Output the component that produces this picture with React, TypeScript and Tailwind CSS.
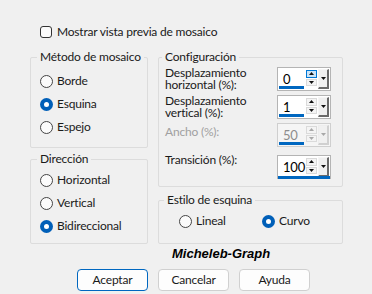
import { FC, ReactNode } from "react";

const font = { fontFamily: 'Lato, "Noto Sans", "Segoe UI", sans-serif' };

interface radioProps {
	label: string;
	checked?: boolean;
	className?: string;
}

const Radio: FC<radioProps> = ({ label, checked, className }) => {
	return (
		<div className={`flex items-center h-[16px] gap-[4px] ${className ?? ""}`}>
			{checked ? (
				<span className="w-[13px] h-[13px] rounded-full bg-[#005fb8] flex items-center justify-center shrink-0">
					<span className="w-[5px] h-[5px] rounded-full bg-white" />
				</span>
			) : (
				<span className="w-[13px] h-[13px] rounded-full border border-[#444] bg-[#fbfbfb] shrink-0" />
			)}
			<span className="whitespace-nowrap">{label}</span>
		</div>
	);
};

const Arrow: FC<{ up?: boolean; color: string }> = ({ up, color }) => (
	<svg width="5" height="3" viewBox="0 0 5 3">
		<polygon points={up ? "0,3 5,3 2.5,0" : "0,0 5,0 2.5,3"} fill={color} />
	</svg>
);

interface spinProps {
	value: string;
	disabled?: boolean;
	hot?: boolean;
	focused?: boolean;
}

const Spin: FC<spinProps> = ({ value, disabled, hot, focused }) => {
	const ink = disabled ? "#a8a8a8" : "#111";
	return (
		<div
			className={`w-[54px] h-[24px] border flex relative shrink-0 ${
				disabled ? "border-[#cfcfcf] bg-[#f5f5f5]" : "border-[#b4b4b4] bg-white"
			}`}>
			<div className="flex-1 relative">
				<span
					className={`absolute left-[5px] top-[3px] text-[13px] leading-[16px] ${
						disabled ? "text-[#8d8d8d]" : "text-black"
					}`}>
					{value}
				</span>
				{!focused && (
					<span className="absolute left-[1px] right-[2px] bottom-[1px] h-[3px] bg-[#0067c0]" />
				)}
			</div>
			<div className="w-[11px] flex flex-col pt-[2px] pb-[4px] gap-px">
				<div
					className={`flex-1 flex items-center justify-center border ${
						hot ? "border-[#0078d7] bg-[#cce4f7]" : "border-[#dadada] bg-[#f4f4f4]"
					}`}>
					<Arrow up color={ink} />
				</div>
				<div className="flex-1 flex items-center justify-center border border-[#dadada] bg-[#f4f4f4]">
					<Arrow color={ink} />
				</div>
			</div>
			<div
				className={`w-[11px] my-[1px] mx-[1px] flex items-center justify-center border-r-2 border-b-2 border-t border-l ${
					disabled
						? "border-r-[#d0d0d0] border-b-[#d0d0d0] border-t-[#ededed] border-l-[#ededed]"
						: "border-r-[#6a6a6a] border-b-[#6a6a6a] border-t-[#f6f6f6] border-l-[#f6f6f6]"
				} bg-[#f0f0f0]`}>
				<Arrow color={ink} />
			</div>
			{focused && (
				<span className="absolute left-0 right-0 bottom-[-1px] h-[3px] bg-[#0067c0]" />
			)}
		</div>
	);
};

interface groupProps {
	title: string;
	className: string;
	titleIndent: string;
	children: ReactNode;
}

// group box: title sits on the top border, pulled up by a negative margin
const Group: FC<groupProps> = ({ title, className, titleIndent, children }) => (
	<div className={`border border-[#dcdcdc] rounded-[2px] ${className}`}>
		<div
			className={`-mt-[9px] w-fit px-[3px] bg-[#f0f0f0] leading-[16px] h-[16px] whitespace-nowrap ${titleIndent}`}>
			{title}
		</div>
		{children}
	</div>
);

export default function App() {
	return (
		<div
			className="w-[372px] h-[294px] bg-[#f0f0f0] text-[12px] tracking-[-0.2px] text-[#1a1a1a] pt-[25px] pl-[30px] overflow-hidden"
			style={font}>
			<div className="flex items-center gap-[5px] ml-[10px] h-[14px]">
				<span className="w-[12px] h-[12px] border border-[#333] rounded-[3px] bg-[#fbfbfb]" />
				<span>Mostrar vista previa de mosaico</span>
			</div>

			<div className="flex gap-[10px] mt-[18px]">
				<div className="w-[118px] flex flex-col gap-[11px]">
					<Group title="Método de mosaico" className="h-[91px] pl-[9px]" titleIndent="ml-[-3px]">
						<div className="flex flex-col gap-[7px] mt-[8px]">
							<Radio label="Borde" />
							<Radio label="Esquina" checked />
							<Radio label="Espejo" />
						</div>
					</Group>
					<Group title="Dirección" className="h-[85px] pl-[9px]" titleIndent="ml-[-3px]">
						<div className="flex flex-col gap-[7px] mt-[5px]">
							<Radio label="Horizontal" />
							<Radio label="Vertical" />
							<Radio label="Bidireccional" checked />
						</div>
					</Group>
				</div>

				<div className="w-[185px] flex flex-col">
					<Group title="Configuración" className="h-[130px] pl-[6px] pr-[11px]" titleIndent="ml-[-3px]">
						<div className="flex items-start justify-between h-[24px] mt-[2px]">
							<span className="leading-[12px] whitespace-nowrap">
								Desplazamiento
								<br />
								horizontal (%):
							</span>
							<Spin value="0" hot />
						</div>
						<div className="flex items-start justify-between h-[24px] mt-[4px]">
							<span className="leading-[12px] whitespace-nowrap">
								Desplazamiento
								<br />
								vertical (%):
							</span>
							<Spin value="1" />
						</div>
						<div className="flex items-start justify-between h-[24px] mt-[4px]">
							<span className="text-[#a0a0a0] leading-[16px] mt-[1px]">Ancho (%):</span>
							<Spin value="50" disabled />
						</div>
						<div className="flex items-start justify-between h-[24px] mt-[8px]">
							<span className="leading-[16px] -mt-[3px]">Transición (%):</span>
							<Spin value="100" focused />
						</div>
					</Group>
					<Group title="Estilo de esquina" className="h-[44px] mt-[13px] pl-[20px]" titleIndent="ml-[-15px]">
						<div className="flex mt-[5px]">
							<Radio label="Lineal" className="w-[83px]" />
							<Radio label="Curvo" checked />
						</div>
					</Group>
					<div
						className="ml-[14px] mt-[2px] h-[16px] leading-[16px] text-[13px] tracking-normal font-bold italic text-black"
						style={{ fontFamily: '"Liberation Sans", Arial, sans-serif' }}>
						Micheleb-Graph
					</div>
				</div>
			</div>

			<div className="flex gap-[10px] ml-[47px] mt-[7px]">
				<button className="w-[71px] h-[22px] rounded-[4px] border border-[#0067c0] bg-[#fdfdfd]">
					Aceptar
				</button>
				<button className="w-[71px] h-[22px] rounded-[4px] border border-[#d0d0d0] bg-[#fdfdfd]">
					Cancelar
				</button>
				<button className="w-[71px] h-[22px] rounded-[4px] border border-[#d0d0d0] bg-[#fdfdfd]">
					Ayuda
				</button>
			</div>
		</div>
	);
}
